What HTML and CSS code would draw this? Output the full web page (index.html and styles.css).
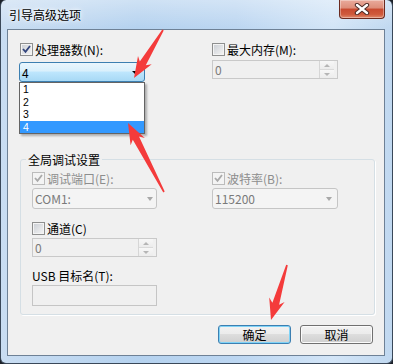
FILE: index.html
```html
<!DOCTYPE html>
<html lang="zh-CN">

<head>
    <meta charset="UTF-8">
    <meta name="viewport" content="width=device-width, initial-scale=1.0">
    <title>引导高级选项</title>
    <link rel="stylesheet" href="styles.css">
</head>

<body>
    <div class="window">
        <div class="titlebar">
            <span class="title">引导高级选项</span>
            <button class="close-btn" type="button" aria-label="关闭">
                <svg width="16" height="12" viewBox="0 0 16 12">
                    <path d="M3 2 L13 10 M13 2 L3 10" stroke="#4a2a26" stroke-width="4.4" stroke-linecap="round" />
                    <path d="M3 2 L13 10 M13 2 L3 10" stroke="#ffffff" stroke-width="2.4" stroke-linecap="round" />
                </svg>
            </button>
        </div>

        <div class="client">
            <div class="top-row">
                <div class="col">
                    <label class="check first">
                        <span class="box">
                            <svg width="11" height="11" viewBox="0 0 11 11"><path d="M2 5 L4.5 7.8 L9 2" fill="none" stroke="#33457c" stroke-width="1.8" /></svg>
                        </span>处理器数(N):
                    </label>
                    <div class="combo-wrap">
                        <div class="combo open"><span>4</span><span class="arrow"></span></div>
                        <ul class="dropdown">
                            <li>1</li>
                            <li>2</li>
                            <li>3</li>
                            <li class="selected">4</li>
                        </ul>
                    </div>
                </div>
                <div class="col">
                    <label class="check">
                        <span class="box"></span>最大内存(M):
                    </label>
                    <div class="spinner top-spinner">
                        <span class="value">0</span>
                        <span class="spin"><span class="up"></span><span class="down"></span></span>
                    </div>
                </div>
            </div>

            <fieldset class="group">
                <legend>全局调试设置</legend>
                <div class="group-grid">
                    <div class="col">
                        <label class="check disabled">
                            <span class="box">
                                <svg width="11" height="11" viewBox="0 0 11 11"><path d="M2 5 L4.5 7.8 L9 2" fill="none" stroke="#a9a9a9" stroke-width="1.8" /></svg>
                            </span>调试端口(E):
                        </label>
                        <div class="combo disabled-combo"><span>COM1:</span><span class="arrow"></span></div>

                        <label class="check channel">
                            <span class="box"></span>通道(C)
                        </label>
                        <div class="spinner">
                            <span class="value">0</span>
                            <span class="spin"><span class="up"></span><span class="down"></span></span>
                        </div>

                        <div class="usb-label">USB 目标名(T):</div>
                        <div class="textbox"></div>
                    </div>
                    <div class="col">
                        <label class="check disabled">
                            <span class="box">
                                <svg width="11" height="11" viewBox="0 0 11 11"><path d="M2 5 L4.5 7.8 L9 2" fill="none" stroke="#a9a9a9" stroke-width="1.8" /></svg>
                            </span>波特率(B):
                        </label>
                        <div class="combo disabled-combo baud"><span>115200</span><span class="arrow"></span></div>
                    </div>
                </div>
            </fieldset>

            <div class="buttons">
                <button class="btn default" type="button">确定</button>
                <button class="btn" type="button">取消</button>
            </div>
        </div>
    </div>

    <!-- red marks drawn over the screenshot -->
    <svg class="marks" width="393" height="364" viewBox="0 0 393 364">
        <polygon points="163.7,30.4 145.8,65.3 151.7,64.2 134,78 138.0,55.9 139.8,61.6 162.3,29.6" />
        <polygon points="163.3,192.4 132.8,139.7 130.6,145.3 128,123 144.8,137.9 139.0,136.5 164.7,191.6" />
        <polygon points="287.8,265.2 279.1,304.7 284.6,302.1 271,320 269.2,297.6 272.4,302.7 286.2,264.8" />
    </svg>
</body>

</html>
```

FILE: styles.css
```css
* {
    box-sizing: border-box;
}

body {
    margin: 0;
    background: #1c2129;
    font-family: "Noto Sans CJK SC", "Noto Sans", sans-serif;
    font-size: 12px;
    color: #000;
}

.window {
    width: 393px;
    height: 364px;
    display: flex;
    flex-direction: column;
    padding: 0 7px 7px 6px;
    border: 1px solid #3a4859;
    border-top: none;
    border-radius: 6px;
    background:
        linear-gradient(to bottom, rgba(255, 255, 255, 0.35), rgba(255, 255, 255, 0) 28px),
        linear-gradient(to right, #c9ddf2 0%, #b5d2ef 35%, #bcd6f1 60%, #d3e5f7 85%, #c0d8f0 100%);
}

.titlebar {
    height: 29px;
    display: flex;
    justify-content: space-between;
    align-items: flex-start;
}

.title {
    margin: 8px 0 0 2px;
    line-height: 14px;
    font-size: 12px;
    text-shadow: 0 0 6px #fff, 0 0 3px #fff;
}

.close-btn {
    width: 46px;
    height: 19px;
    padding: 0;
    display: flex;
    align-items: center;
    justify-content: center;
    border: 1px solid #6b2a1f;
    border-top: none;
    border-radius: 0 0 4px 4px;
    background: linear-gradient(to bottom, #e9ab9c 0%, #dd8d79 45%, #c84a30 50%, #cf5a3c 80%, #e08a6d 100%);
    box-shadow: inset 0 0 0 1px rgba(255, 255, 255, 0.35);
}

.client {
    flex: 1;
    border: 1px solid #6e8196;
    background: #f0f0f0;
    display: flex;
    flex-direction: column;
}

.top-row {
    display: grid;
    grid-template-columns: 126px 126px;
    column-gap: 67px;
    margin: 13px 0 0 11px;
}

.col {
    display: flex;
    flex-direction: column;
}

.check {
    display: flex;
    align-items: center;
    height: 13px;
    line-height: 13px;
    white-space: nowrap;
}

.check.first {
    margin-left: 1px;
}

.box {
    width: 13px;
    height: 13px;
    flex: none;
    margin-right: 2px;
    border: 1px solid #8e8f8f;
    background: linear-gradient(135deg, #c9cdd3, #f6f6f6);
    box-shadow: inset 0 0 0 1px #f4f4f4;
}

.box svg {
    display: block;
}

.check.disabled {
    color: #8d8d8d;
}

.check.disabled .box {
    border-color: #bcbcbc;
    background: #f4f4f4;
    box-shadow: none;
}

.combo-wrap {
    position: relative;
    margin-top: 6px;
}

.combo {
    height: 20px;
    display: flex;
    align-items: center;
    justify-content: space-between;
    padding: 0 6px 0 2px;
    border-radius: 3px;
}

.combo.open {
    border: 1px solid #3c7fb1;
    background: linear-gradient(to bottom, #eaf6fd 0%, #d9f0fc 45%, #bee6fd 50%, #a7d9f5 100%);
}

.combo .arrow {
    width: 0;
    height: 0;
    border-left: 3px solid transparent;
    border-right: 3px solid transparent;
    border-top: 3px solid #000;
}

.dropdown {
    position: absolute;
    top: 20px;
    left: 0;
    width: 126px;
    margin: 0;
    padding: 0;
    list-style: none;
    background: #fff;
    border: 1px solid #646464;
    box-shadow: 2px 2px 2px rgba(0, 0, 0, 0.28);
}

.dropdown li {
    height: 12.5px;
    line-height: 12.5px;
    padding-left: 3px;
    font-family: "Liberation Sans", sans-serif;
    font-size: 10.5px;
    overflow: hidden;
}

.dropdown li.selected {
    background: #3399ff;
    color: #fff;
}

.spinner {
    height: 19px;
    display: flex;
    align-items: stretch;
    border: 1px solid #c9c9c9;
    background: #f0f0f0;
    color: #7a7a7a;
}

.top-spinner {
    margin-top: 4px;
}

.spinner .value {
    flex: 1;
    padding-left: 2px;
    line-height: 17px;
}

.spin {
    width: 15px;
    margin: 0 3px 0 0;
    display: flex;
    flex-direction: column;
    border-left: 1px solid #d6d6d6;
}

.spin span {
    flex: 1;
    display: flex;
    align-items: center;
    justify-content: center;
    background: linear-gradient(to bottom, #f7f7f7, #ececec);
}

.spin .up {
    border-bottom: 1px solid #dadada;
}

.spin .up::after,
.spin .down::after {
    content: "";
    border-left: 3px solid transparent;
    border-right: 3px solid transparent;
}

.spin .up::after {
    border-bottom: 3px solid #b5b5b5;
}

.spin .down::after {
    border-top: 3px solid #b5b5b5;
}

.group {
    margin: 71px 0 0 12px;
    width: 355px;
    height: 162px;
    padding: 6px 0 0 11px;
    border: 1px solid #d5dfe5;
    border-radius: 3px;
    box-shadow: 1px 1px 0 #fff;
    min-width: 0;
}

.group legend {
    margin-left: -6px;
    padding: 0 2px;
    line-height: 13px;
    font-size: 12px;
}

.group-grid {
    display: grid;
    grid-template-columns: 125px 126px;
    column-gap: 55px;
}

.disabled-combo {
    height: 21px;
    margin-top: 3px;
    padding: 0 3px 0 2px;
    border: 1px solid #c5c5c5;
    background: #f4f4f4;
    color: #7a7a7a;
}

.disabled-combo .arrow {
    border-left-width: 3.5px;
    border-right-width: 3.5px;
    border-top: 4px solid #a8a8a8;
}

.disabled-combo.baud {
    padding-right: 5px;
}

.check.channel {
    margin-top: 13px;
}

.channel + .spinner {
    margin-top: 3px;
}

.usb-label {
    margin-top: 12px;
    line-height: 13px;
    white-space: nowrap;
}

.textbox {
    height: 21px;
    margin-top: 3px;
    border: 1px solid #c5c5c5;
    background: #f0f0f0;
}

.buttons {
    display: flex;
    justify-content: flex-end;
    gap: 9px;
    margin-top: 10px;
    padding-right: 11px;
}

.btn {
    width: 73px;
    height: 19px;
    padding: 0;
    font-family: inherit;
    font-size: 12px;
    line-height: 17px;
    color: #000;
    border: 1px solid #707070;
    border-radius: 3px;
    background: linear-gradient(to bottom, #f2f2f2 0%, #ebebeb 50%, #dddddd 50%, #cfcfcf 100%);
    box-shadow: inset 0 0 0 1px #fbfbfb;
}

.btn.default {
    border-color: #3c7fb1;
    box-shadow: inset 0 0 0 1px #7fd3f7;
}

.marks {
    position: absolute;
    top: 0;
    left: 0;
}

.marks polygon {
    fill: #f43b3b;
}
```
